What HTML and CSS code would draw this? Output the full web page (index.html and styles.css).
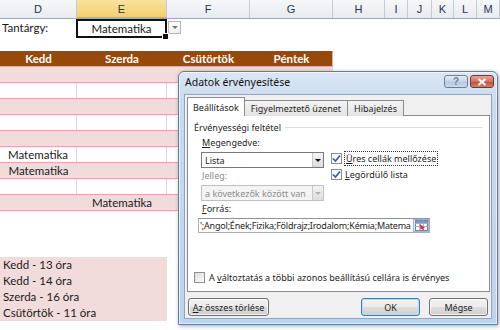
FILE: index.html
```html
<!DOCTYPE html>
<html lang="hu">
<head>
  <meta charset="UTF-8">
  <title>Adatok érvényesítése</title>
  <link rel="stylesheet" href="styles.css">
</head>
<body>
  <div class="page">
    <div class="col-heads">
      <div class="ch">D</div>
      <div class="ch sel">E</div>
      <div class="ch">F</div>
      <div class="ch">G</div>
      <div class="ch">H</div>
      <div class="ch">I</div>
      <div class="ch">J</div>
      <div class="ch">K</div>
      <div class="ch">L</div>
      <div class="ch">M</div>
    </div>

    <div class="subject-row">
      <div class="subject-label">Tantárgy:</div>
      <div class="subject-cell">Matematika</div>
      <div class="cell-dd"><span class="tri"></span></div>
    </div>

    <div class="table">
      <div class="trow head"><div>Kedd</div><div>Szerda</div><div>Csütörtök</div><div>Péntek</div></div>
      <div class="trow pink"><div></div><div></div><div></div><div></div></div>
      <div class="trow white"><div></div><div></div><div></div><div></div></div>
      <div class="trow pink"><div></div><div></div><div></div><div></div></div>
      <div class="trow white"><div></div><div></div><div></div><div></div></div>
      <div class="trow pink"><div></div><div></div><div></div><div></div></div>
      <div class="trow white"><div>Matematika</div><div></div><div></div><div></div></div>
      <div class="trow pink"><div>Matematika</div><div></div><div></div><div></div></div>
      <div class="trow white"><div></div><div></div><div></div><div></div></div>
      <div class="trow pink"><div></div><div>Matematika</div><div></div><div></div></div>
    </div>

    <div class="summary">
      <div>Kedd - 13 óra</div>
      <div>Kedd - 14 óra</div>
      <div>Szerda - 16 óra</div>
      <div>Csütörtök - 11 óra</div>
    </div>

    <div class="dialog">
      <div class="titlebar">
        <span class="title">Adatok érvényesítése</span>
        <div class="win-btns">
          <div class="wbtn help">?</div>
          <div class="wbtn close">
            <svg width="10" height="8" viewBox="0 0 10 8"><path d="M1.5 1 L8.5 7 M8.5 1 L1.5 7" stroke="#fff" stroke-width="2" fill="none"/></svg>
          </div>
        </div>
      </div>
      <div class="client">
        <div class="tabs">
          <div class="tab active">Beállítások</div>
          <div class="tab">Figyelmeztető üzenet</div>
          <div class="tab">Hibajelzés</div>
        </div>
        <div class="panel">
          <div class="group-title"><span>Érvényességi feltétel</span><i></i></div>
          <div class="criteria">
            <div class="left-col">
              <div class="lbl"><u>M</u>egengedve:</div>
              <div class="combo"><span>Lista</span><b class="arrow"><span class="tri"></span></b></div>
              <div class="lbl dis">Jelleg:</div>
              <div class="combo dis"><span>a következők között van</span><b class="arrow"><span class="tri"></span></b></div>
            </div>
            <div class="right-col">
              <div class="check"><span class="box on"><svg width="9" height="9" viewBox="0 0 9 9"><path d="M1 4.5 L3.5 7 L8 1.5" stroke="#3b5a8c" stroke-width="1.6" fill="none"/></svg></span><span class="focus"><u>Ü</u>res cellák mellőzése</span></div>
              <div class="check"><span class="box on"><svg width="9" height="9" viewBox="0 0 9 9"><path d="M1 4.5 L3.5 7 L8 1.5" stroke="#3b5a8c" stroke-width="1.6" fill="none"/></svg></span><span><u>L</u>egördülő lista</span></div>
            </div>
          </div>
          <div class="lbl src"><u>F</u>orrás:</div>
          <div class="source">
            <span class="src-text">';Angol;Ének;Fizika;Földrajz;Irodalom;Kémia;Matema</span>
            <b class="ref-btn">
              <svg width="13" height="11" viewBox="0 0 13 11">
                <rect x="0.5" y="0.5" width="12" height="10" fill="#fff" stroke="#6b88b4"/>
                <path d="M0.5 3.5 H12.5 M0.5 6.5 H12.5 M4.5 0.5 V10.5 M8.5 0.5 V10.5" stroke="#9fb3d1"/>
                <rect x="1" y="1" width="11" height="2" fill="#7c98c6"/>
                <path d="M5 4 L10 8 L8 8 L9 10 L8 10.5 L7 8.5 L5.5 10 Z" fill="#d8262a"/>
              </svg>
            </b>
          </div>
          <div class="spacer"></div>
          <div class="check apply"><span class="box"></span><span>A <u>v</u>áltoztatás a többi azonos beállítású cellára is érvényes</span></div>
        </div>
        <div class="buttons">
          <div class="btn clear-all"><u>A</u>z összes törlése</div>
          <div class="btn ok">OK</div>
          <div class="btn">Mégse</div>
        </div>
      </div>
    </div>
  </div>
</body>
</html>
```

FILE: styles.css
```css
:root {
  --brown: #984807;
  --pink: #f2dcdb;
  --pink-line: #e3a9a7;
  --grid-line: #d9d9d9;
  --head-line: #c5cbd4;
  --dlg-font: "Noto Sans", "DejaVu Sans", sans-serif;
}

* {
  margin: 0;
  padding: 0;
  box-sizing: border-box;
}

html, body {
  width: 500px;
  height: 330px;
  overflow: hidden;
  background: #fff;
}

.page {
  position: relative;
  width: 500px;
  height: 330px;
  overflow: hidden;
  font-family: Lato, "Open Sans", sans-serif;
  font-size: 11.5px;
  color: #1a1a1a;
}

/* column headings */
.col-heads {
  display: grid;
  grid-template-columns: 77px 90px 83px 83px 52px 23px 24px 22px 23px 23px;
  height: 19px;
  background: linear-gradient(#f6f7f9, #e8ebef);
  border-bottom: 1px solid #9eaabb;
}

.ch {
  border-right: 1px solid var(--head-line);
  display: flex;
  align-items: center;
  justify-content: center;
  color: #27364a;
  font-family: "Liberation Sans", sans-serif;
  font-size: 11px;
}

.ch.sel {
  background: linear-gradient(#fae39e, #f4cf6f);
  border-bottom: 1px solid #e8a73c;
}

/* Tantárgy row */
.subject-row {
  display: flex;
  height: 32px;
  align-items: flex-start;
}

.subject-label {
  width: 77px;
  height: 18px;
  line-height: 18px;
  padding-left: 2px;
}

.subject-cell {
  width: 91px;
  height: 19px;
  margin-left: -1px;
  border: 2px solid #111;
  display: flex;
  align-items: center;
  justify-content: center;
  position: relative;
}

.subject-cell::after {
  content: "";
  position: absolute;
  right: -4px;
  bottom: -4px;
  width: 5px;
  height: 5px;
  background: #111;
  border: 1px solid #fff;
}

.cell-dd {
  width: 13px;
  height: 13px;
  margin: 2px 0 0 1px;
  border: 1px solid #b5b5b5;
  background: linear-gradient(#fff, #eee);
  display: flex;
  align-items: center;
  justify-content: center;
}

.tri {
  width: 0;
  height: 0;
  border-left: 3px solid transparent;
  border-right: 3px solid transparent;
  border-top: 3px solid #333;
}

.cell-dd .tri {
  border-top-color: #777;
}

/* schedule table */
.table {
  width: 333px;
}

.trow {
  display: grid;
  grid-template-columns: 77px 90px 83px 83px;
}

.trow > div {
  display: flex;
  align-items: center;
  justify-content: center;
  white-space: nowrap;
}

.trow.head {
  height: 15px;
  background: var(--brown);
  color: #fff;
  font-weight: bold;
  border-right: 1px solid var(--pink-line);
}

.trow.pink {
  height: 17px;
  background: var(--pink);
  border-top: 1px solid var(--pink-line);
  border-bottom: 1px solid var(--pink-line);
}

.trow.white {
  height: 15px;
}

.trow.white > div {
  border-right: 1px solid var(--grid-line);
}

.summary {
  width: 167px;
  margin-top: 46px;
  padding: 0 3px;
  background: var(--pink);
}

.summary > div {
  height: 16px;
  line-height: 16px;
}

/* validation dialog */
.dialog {
  position: absolute;
  left: 178px;
  top: 71px;
  width: 320px;
  height: 254px;
  display: flex;
  flex-direction: column;
  border: 1px solid #5d7ea7;
  border-radius: 6px 6px 0 0;
  background: linear-gradient(#dbe6f4 0, #c9dbef 30px, #bfd3eb 100%);
  box-shadow: 1px 1px 4px rgba(0, 0, 0, 0.35), inset 0 0 0 1px rgba(255, 255, 255, 0.6);
  font-family: var(--dlg-font);
  font-size: 9px;
  color: #1e1e1e;
}

.titlebar {
  height: 22px;
  display: flex;
  align-items: flex-start;
  justify-content: space-between;
  padding: 0 3px 0 6px;
}

.title {
  font-size: 10.5px;
  line-height: 21px;
  color: #111;
}

.win-btns {
  display: flex;
  gap: 2px;
  margin-top: 3px;
}

.wbtn {
  width: 24px;
  height: 13px;
  border: 1px solid #6f7e93;
  border-radius: 3px;
  display: flex;
  align-items: center;
  justify-content: center;
}

.wbtn.help {
  background: linear-gradient(#e6eef8, #c3d3e7 50%, #b3c7e0 51%, #cbdaee);
  color: #6d7d94;
  font-family: "Liberation Sans", sans-serif;
  font-weight: bold;
  font-size: 10px;
  line-height: 1;
}

.wbtn.close {
  background: linear-gradient(#e8a598, #d2705f 50%, #c24a36 51%, #d5806a);
  border-color: #6b3b33;
}

.client {
  flex: 1;
  margin: 0 5px 5px;
  border: 1px solid #8fa6c2;
  background: #f0f0f0;
  display: flex;
  flex-direction: column;
  padding: 2px 1px 0 2px;
}

.tabs {
  display: flex;
  align-items: flex-end;
  height: 19px;
  position: relative;
  z-index: 1;
}

.tab {
  height: 16px;
  padding: 0 6px;
  border: 1px solid #898c95;
  border-bottom: none;
  margin-right: -1px;
  background: linear-gradient(#f4f4f4, #e3e3e3);
  line-height: 15px;
  white-space: nowrap;
}

.tab.active {
  height: 19px;
  padding: 0 5px;
  background: #fff;
  line-height: 19px;
}

.panel {
  height: 177px;
  margin-top: -1px;
  border: 1px solid #898c95;
  background: #fff;
  display: flex;
  flex-direction: column;
  padding: 5px 6px 7px 6px;
}

.group-title {
  display: flex;
  align-items: center;
  gap: 4px;
  height: 12px;
}

.group-title i {
  flex: 1;
  height: 1px;
  background: #d5dfe5;
}

.criteria {
  display: flex;
  padding-left: 7px;
  margin-top: 4px;
}

.left-col {
  width: 123px;
}

.lbl {
  height: 12px;
  line-height: 12px;
  padding-left: 1px;
}

.lbl.dis {
  color: #8d8d8d;
  margin-top: 2px;
}

.combo {
  height: 16px;
  margin-top: 3px;
  border: 1px solid #7a7a7a;
  display: flex;
  align-items: center;
  justify-content: space-between;
  padding-left: 3px;
  background: #fff;
}

.combo .arrow {
  width: 11px;
  height: 14px;
  border-left: 1px solid #c8c8c8;
  background: linear-gradient(#f4f4f4, #dcdcdc);
  display: flex;
  align-items: center;
  justify-content: center;
}

.combo .tri {
  border-top-color: #111;
}

.combo.dis {
  border-color: #c0c0c0;
  background: #f4f4f4;
  color: #8d8d8d;
}

.combo.dis .tri {
  border-top-color: #b0b0b0;
}

.right-col {
  margin-left: 7px;
  margin-top: 15px;
  display: flex;
  flex-direction: column;
  gap: 3px;
}

.check {
  display: flex;
  align-items: center;
  gap: 3px;
  height: 13px;
  white-space: nowrap;
}

.box {
  width: 11px;
  height: 11px;
  border: 1px solid #8e8f8f;
  background: linear-gradient(135deg, #dcdcdc, #fbfbfb);
  display: flex;
  align-items: center;
  justify-content: center;
  flex-shrink: 0;
}

.box.on {
  background: linear-gradient(135deg, #eef2f7, #ffffff);
}

.focus {
  outline: 1px dotted #333;
  padding: 0 1px;
}

.lbl.src {
  margin-top: 2px;
  padding-left: 8px;
}

.source {
  margin: 3px 0 0 4px;
  width: 232px;
  height: 15px;
  border: 1px solid #abadb3;
  border-top-color: #8f9299;
  display: flex;
  align-items: center;
  overflow: hidden;
}

.src-text {
  flex: 1;
  white-space: nowrap;
  padding-left: 1px;
  letter-spacing: -0.2px;
}

.ref-btn {
  width: 16px;
  height: 13px;
  flex-shrink: 0;
  border: 1px solid #a8b5c8;
  background: linear-gradient(#eef3fa, #d6e1ef);
  display: flex;
  align-items: center;
  justify-content: center;
}

.spacer {
  flex: 1;
}

.check.apply {
  gap: 4px;
}

.buttons {
  display: flex;
  align-items: center;
  padding: 6px 2px 0 1px;
}

.btn {
  height: 18px;
  width: 59px;
  border: 1px solid #707070;
  border-radius: 3px;
  background: linear-gradient(#f2f2f2, #ebebeb 50%, #dddddd 51%, #cfcfcf);
  display: flex;
  align-items: center;
  justify-content: center;
  box-shadow: inset 0 0 0 1px rgba(255, 255, 255, 0.7);
  white-space: nowrap;
}

.btn.clear-all {
  width: 81px;
  margin-right: auto;
}

.btn.ok {
  border-color: #3c7fb1;
  box-shadow: inset 0 0 0 1px #b5dcf3;
  margin-right: 9px;
}
```
